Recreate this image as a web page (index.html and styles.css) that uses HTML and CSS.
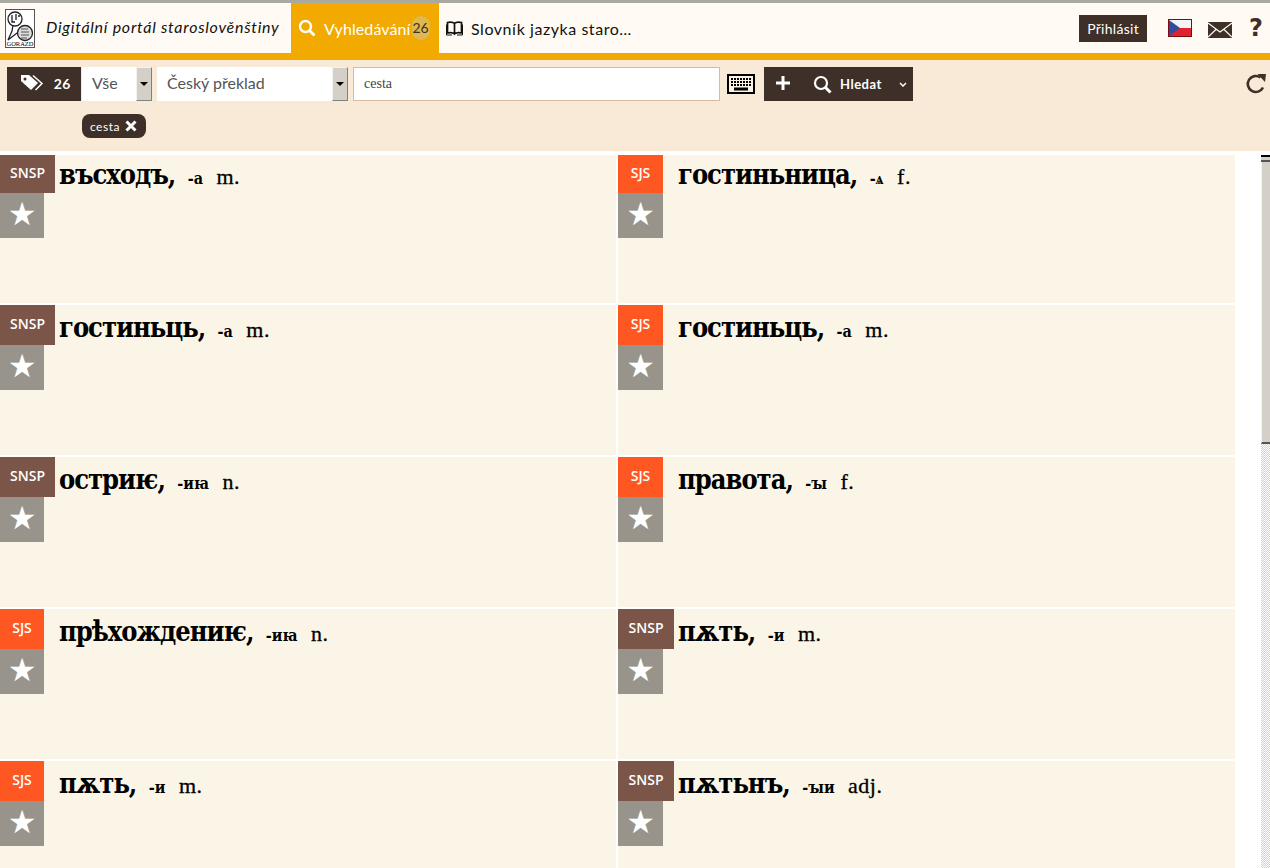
FILE: index.html
```html
<!DOCTYPE html>
<html lang="cs">
<head>
    <meta charset="UTF-8">
    <meta name="viewport" content="width=device-width, initial-scale=1.0">
    <title>Digitální portál staroslověnštiny</title>
    <link rel="stylesheet" href="styles.css">
</head>
<body>
    <header class="topbar">
        <a class="logo" href="#">
            <svg width="30" height="39" viewBox="0 0 30 39">
                <rect x="0.5" y="0.5" width="29" height="38" fill="#fff" stroke="#555"/>
                <circle cx="10" cy="10" r="7" fill="#fff" stroke="#222" stroke-width="1.300"/>
                <path d="M7 6v7h3M11 5v6M13 7h2M8 16 7 22 3 31l9-7" fill="none" stroke="#222" stroke-width="1.300"/>
                <circle cx="20" cy="24" r="7.500" fill="#ddd" stroke="#222" stroke-width="1.300"/>
                <path d="M16 20h7M16 23h8M16 26h8M16 29h6" stroke="#555"/>
                <text x="15" y="37" text-anchor="middle" class="logo-text">GORAZD</text>
            </svg>
        </a>
        <div class="portal-title">Digitální portál staroslověnštiny</div>
        <a class="tab tab-active" href="#">
            <svg width="18" height="18" viewBox="0 0 18 18"><circle cx="7.500" cy="7.500" r="5.500" fill="none" stroke="#fff" stroke-width="2.400"/><path d="M11.500 11.500 16.500 16.500" stroke="#fff" stroke-width="2.800"/></svg>
            <span class="tab-label">Vyhledávání</span>
            <span class="tab-count">26</span>
        </a>
        <a class="tab" href="#">
            <svg width="17" height="15" viewBox="0 0 17 15"><path d="M8.500 2.500C7 1 4 1 1.500 1.500V12C4 11.500 7 11.500 8.500 13 10 11.500 13 11.500 15.500 12V1.500C13 1 10 1 8.500 2.500ZM8.500 2.500V13" fill="none" stroke="#111" stroke-width="1.700"/><path d="M0.500 3.500V14H6M16.500 3.500V14H11" fill="none" stroke="#111"/></svg>
            <span class="tab-label">Slovník jazyka staro…</span>
        </a>
        <div class="top-actions">
            <a class="login" href="#">Přihlásit</a>
            <svg class="flag" width="24" height="18" viewBox="0 0 24 18">
                <rect width="24" height="18" fill="#7b0b10"/>
                <rect x="1" y="1" width="22" height="8" fill="#f4f4f6"/>
                <rect x="1" y="9" width="22" height="8" fill="#e0212f"/>
                <path d="M1 1 12 9 1 17Z" fill="#2f4d9c"/>
            </svg>
            <svg class="mail" width="24" height="16" viewBox="0 0 24 16">
                <rect width="24" height="16" fill="#3e2f28"/>
                <path d="M0 1 12 10 24 1M0 15 8.500 7M24 15 15.500 7" fill="none" stroke="#fffbf4" stroke-width="1.200"/>
            </svg>
            <span class="help">?</span>
        </div>
    </header>

    <section class="toolbar">
        <div class="search-row">
            <div class="tag-count">
                <svg width="24" height="18" viewBox="0 0 24 18"><path d="M1 1h8l9 8-7 7-10-9Z" fill="#fff"/><circle cx="5" cy="5" r="1.500" fill="#3e2f28"/><path d="M13 1.500 22 9.500 15.500 16" fill="none" stroke="#fff" stroke-width="1.500"/></svg>
                <span>26</span>
            </div>
            <div class="select select-small">
                <span>Vše</span>
                <i class="select-arrow"></i>
            </div>
            <div class="select select-large">
                <span>Český překlad</span>
                <i class="select-arrow"></i>
            </div>
            <div class="search-input">cesta</div>
            <svg class="keyboard" width="28" height="20" viewBox="0 0 28 20">
                <rect x="1" y="1" width="26" height="18" fill="#fbf3e4" stroke="#000" stroke-width="2"/>
                <path d="M4 5h20M4 8h20M4 11h20" stroke="#000" stroke-width="2" stroke-dasharray="2 1"/>
                <path d="M7 15h14" stroke="#000" stroke-width="3"/>
            </svg>
            <div class="search-buttons">
                <svg width="14" height="14" viewBox="0 0 14 14"><path d="M7 0v14M0 7h14" stroke="#fff" stroke-width="3"/></svg>
                <svg class="search-icon" width="19" height="19" viewBox="0 0 19 19"><circle cx="8" cy="8" r="6" fill="none" stroke="#fff" stroke-width="2.200"/><path d="M12 12 17.500 17.500" stroke="#fff" stroke-width="3"/></svg>
                <span class="search-label">Hledat</span>
                <svg class="search-caret" width="8" height="5" viewBox="0 0 8 5"><path d="M1 1 4 4 7 1" fill="none" stroke="#fff" stroke-width="1.500"/></svg>
            </div>
            <svg class="refresh" width="22" height="22" viewBox="0 0 22 22"><path d="M18 14.500A8 8 0 1 1 15.500 4.500" fill="none" stroke="#3e2f28" stroke-width="2.600"/><path d="M12.500 1 21 1 20 9Z" fill="#3e2f28"/></svg>
        </div>
        <div class="chips">
            <span class="chip">cesta
                <svg width="12" height="12" viewBox="0 0 12 12"><path d="M1.500 1.500 10.500 10.500M10.500 1.500 1.500 10.500" stroke="#fff" stroke-width="3"/></svg>
            </span>
        </div>
    </section>

    <main class="content">
        <div class="results">
            <article class="entry">
                <div class="side"><div class="source snsp">SNSP</div><div class="star">★</div></div>
                <h3 class="word">въсходъ, <span class="ending">-а</span> <span class="gram">m.</span></h3>
            </article>
            <article class="entry">
                <div class="side"><div class="source sjs">SJS</div><div class="star">★</div></div>
                <h3 class="word">гостиньница, <span class="ending">-ѧ</span> <span class="gram">f.</span></h3>
            </article>
            <article class="entry">
                <div class="side"><div class="source snsp">SNSP</div><div class="star">★</div></div>
                <h3 class="word">гостиньць, <span class="ending">-а</span> <span class="gram">m.</span></h3>
            </article>
            <article class="entry">
                <div class="side"><div class="source sjs">SJS</div><div class="star">★</div></div>
                <h3 class="word">гостиньць, <span class="ending">-а</span> <span class="gram">m.</span></h3>
            </article>
            <article class="entry">
                <div class="side"><div class="source snsp">SNSP</div><div class="star">★</div></div>
                <h3 class="word">остриѥ, <span class="ending">-иꙗ</span> <span class="gram">n.</span></h3>
            </article>
            <article class="entry">
                <div class="side"><div class="source sjs">SJS</div><div class="star">★</div></div>
                <h3 class="word">правота, <span class="ending">-ꙑ</span> <span class="gram">f.</span></h3>
            </article>
            <article class="entry">
                <div class="side"><div class="source sjs">SJS</div><div class="star">★</div></div>
                <h3 class="word">прѣхождениѥ, <span class="ending">-иꙗ</span> <span class="gram">n.</span></h3>
            </article>
            <article class="entry">
                <div class="side"><div class="source snsp">SNSP</div><div class="star">★</div></div>
                <h3 class="word">пѫть, <span class="ending">-и</span> <span class="gram">m.</span></h3>
            </article>
            <article class="entry">
                <div class="side"><div class="source sjs">SJS</div><div class="star">★</div></div>
                <h3 class="word">пѫть, <span class="ending">-и</span> <span class="gram">m.</span></h3>
            </article>
            <article class="entry">
                <div class="side"><div class="source snsp">SNSP</div><div class="star">★</div></div>
                <h3 class="word">пѫтьнъ, <span class="ending">-ꙑи</span> <span class="gram">adj.</span></h3>
            </article>
        </div>
        <div class="scrollbar">
            <div class="scroll-arrow"></div>
            <div class="scroll-thumb"></div>
        </div>
    </main>
</body>
</html>
```

FILE: styles.css
```css
html, body {
    height: 100%;
    margin: 0;
    overflow: hidden;
}
body {
    background-color: white;
    font-family: "Lato", "Noto Sans", sans-serif;
    color: #111;
}
a {
    color: inherit;
    text-decoration: none;
}
svg {
    display: block;
    flex: none;
}

/* top bar */
.topbar {
    display: flex;
    align-items: stretch;
    height: 50px;
    background-color: #fffbf4;
    border-top: 3px solid #aaa9a1;
    border-bottom: 7px solid #f2a900;
}
.logo {
    display: flex;
    align-items: center;
    padding-left: 5px;
    width: 41px;
}
.logo-text {
    font-family: "Liberation Serif", serif;
    font-size: 6.500px;
}
.portal-title {
    width: 245px;
    line-height: 48px;
    font-size: 16px;
    font-style: italic;
    letter-spacing: 0.720px;
}
.tab {
    display: flex;
    align-items: center;
    padding-left: 7px;
    font-size: 16px;
    letter-spacing: 0.550px;
}
.tab-active {
    width: 141px;
    background-color: #f2a900;
    color: white;
    letter-spacing: 0.100px;
}
.tab .tab-label {
    margin-left: 8px;
}
.tab-count {
    display: block;
    width: 18px;
    height: 24px;
    line-height: 24px;
    text-align: center;
    border-radius: 9px;
    background-color: #e0b850;
    color: #3e2f28;
    font-size: 14px;
    letter-spacing: 0;
    margin-left: 1px;
}
.top-actions {
    display: flex;
    align-items: center;
    margin-left: auto;
    padding-right: 7px;
}
.login {
    background-color: #3e2f28;
    color: white;
    font-size: 14px;
    letter-spacing: 0.300px;
    line-height: 27px;
    padding: 0 8px;
    margin-right: 21px;
    margin-top: 1px;
}
.flag {
    margin-right: 16px;
    margin-top: -1px;
}
.mail {
    margin-right: 17px;
    margin-top: 3px;
}
.help {
    color: #3e2f28;
    font-family: "DejaVu Sans", sans-serif;
    font-weight: bold;
    font-size: 24px;
    margin-top: 0;
}

/* search toolbar */
.toolbar {
    height: 91px;
    box-sizing: border-box;
    padding: 7px 3px 0 7px;
    background-color: #f9ead7;
}
.search-row {
    display: flex;
    align-items: center;
    height: 34px;
}
.tag-count {
    display: flex;
    align-items: center;
    justify-content: space-between;
    box-sizing: border-box;
    width: 74px;
    height: 34px;
    padding: 0 10px 2px 13px;
    background-color: #3e2f28;
    color: white;
    font-size: 14px;
    font-weight: bold;
    letter-spacing: 0.500px;
}
.select {
    display: flex;
    align-items: center;
    justify-content: space-between;
    box-sizing: border-box;
    height: 34px;
    background-color: white;
    color: #555;
    font-size: 16px;
    line-height: 32px;
}
.select span {
    margin-top: -2px;
}
.select-small {
    width: 70px;
    margin-left: 1px;
    padding-left: 10px;
}
.select-large {
    width: 191px;
    margin-left: 5px;
    padding-left: 10px;
}
.select-arrow {
    position: relative;
    display: block;
    box-sizing: border-box;
    width: 16px;
    height: 34px;
    background-color: #d4d0c8;
    border: 1px solid #808080;
    border-left-color: #f4f2ee;
    border-top-color: #f4f2ee;
}
.select-arrow::after {
    content: "";
    position: absolute;
    left: 3px;
    top: 14px;
    border: 4px solid transparent;
    border-top-color: #000;
    border-bottom: 0;
}
.search-input {
    box-sizing: border-box;
    width: 367px;
    height: 34px;
    margin-left: 5px;
    padding-left: 10px;
    line-height: 32px;
    background-color: white;
    border: 1px solid #dab9a3;
    color: #444;
    font-family: "Liberation Serif", serif;
    font-size: 14px;
}
.keyboard {
    margin-left: 7px;
}
.search-buttons {
    display: flex;
    align-items: center;
    width: 149px;
    height: 34px;
    margin-left: 9px;
    background-color: #3e2f28;
    color: white;
}
.search-buttons > svg:first-child {
    margin-left: 12px;
    margin-top: -3px;
}
.search-icon {
    margin-left: 23px;
}
.search-label {
    margin-left: 8px;
    font-size: 13px;
    font-weight: bold;
    letter-spacing: 0.500px;
}
.search-caret {
    margin-left: 17px;
}
.refresh {
    margin-left: auto;
    margin-top: -1px;
}
.chips {
    display: flex;
    margin: 13px 0 0 75px;
}
.chip {
    display: flex;
    align-items: center;
    gap: 5px;
    height: 24px;
    padding: 0 9px 0 8px;
    border-radius: 8px;
    background-color: #3e2f28;
    color: white;
    font-size: 12px;
    letter-spacing: 0.500px;
}

/* results */
.content {
    display: flex;
    padding-top: 4px;
}
.results {
    display: grid;
    grid-template-columns: 616px 617px;
    grid-template-rows: 148px repeat(4, 150px);
    gap: 2px;
}
.entry {
    display: flex;
    background-color: #fbf5e8;
}
.entry:nth-child(-n+2) .source {
    height: 38px;
    line-height: 35px;
}
.entry:nth-child(-n+2) .word {
    margin-top: 4px;
}
.side {
    flex: none;
    width: 59px;
}
.entry:nth-child(even) .side {
    width: 60px;
}
.source {
    height: 40px;
    line-height: 38px;
    text-align: center;
    color: white;
    font-family: "Open Sans", sans-serif;
    font-size: 14px;
    font-weight: 600;
}
.snsp {
    width: 55px;
    background-color: #7a5548;
}
.sjs {
    width: 44px;
    background-color: #ff5722;
}
.star {
    width: 44px;
    height: 45px;
    line-height: 42px;
    text-align: center;
    background-color: #98948b;
    color: white;
    font-family: "DejaVu Sans", sans-serif;
    font-size: 32px;
}
.entry:nth-child(even) .snsp {
    width: 56px;
}
.entry:nth-child(even) .sjs,
.entry:nth-child(even) .star {
    width: 45px;
}
.word {
    margin: 7px 0 0;
    font-family: "DejaVu Serif", serif;
    font-size: 27px;
    font-stretch: condensed;
    font-weight: bold;
    line-height: 32px;
    letter-spacing: -1px;
    color: #000;
}
.ending {
    font-size: 16px;
    letter-spacing: 0;
    margin-left: 5px;
}
.gram {
    font-family: "Liberation Serif", serif;
    font-size: 22px;
    font-weight: normal;
    letter-spacing: 0.500px;
    margin-left: 6px;
    -webkit-text-stroke: 0.300px #000;
}

/* scrollbar */
.scrollbar {
    width: 9px;
    margin-left: auto;
    height: 713px;
    background-color: #fff;
    background-image: repeating-conic-gradient(#d4d0c8 0 25%, #fff 0 50%);
    background-size: 2px 2px;
}
.scroll-arrow {
    box-sizing: border-box;
    height: 7px;
    background-color: #d4d0c8;
    border-top: 2px solid #000;
    border-bottom: 2px solid #555;
}
.scroll-thumb {
    box-sizing: border-box;
    height: 282px;
    background-color: #d4d0c8;
    border-left: 1px solid #f4f2ee;
    border-bottom: 2px solid #555;
}
```
